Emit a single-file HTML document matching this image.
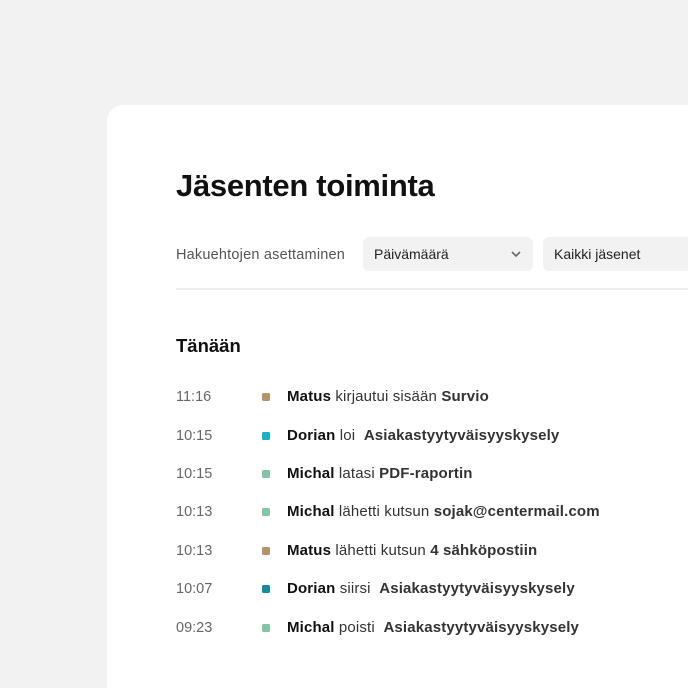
<!DOCTYPE html>
<html style="overflow:hidden;height:688px"><head><meta charset="utf-8"><style>
body{margin:0;width:688px;height:688px;background:#f1f2f1;overflow:hidden;font-family:"Liberation Sans",Arial,sans-serif;position:relative}
.card{position:absolute;left:107px;top:105px;width:581px;height:583px;background:#fff;border-radius:16px 0 0 0}
h1{position:absolute;left:176px;top:168px;margin:0;font-size:31px;font-weight:bold;color:#111;letter-spacing:-0.3px}
.lab{position:absolute;left:176px;top:247px;font-size:14.5px;color:#555;letter-spacing:0.2px}
.sel{position:absolute;top:237px;height:34px;background:#f2f2f2;border-radius:6px;font-size:14px;color:#222;line-height:35px;box-sizing:border-box;padding-left:11px}
.hr{position:absolute;left:176px;top:288px;width:512px;height:2px;background:#ececec}
h2{position:absolute;left:176px;top:335px;margin:0;font-size:18.5px;font-weight:bold;color:#111}
.row{position:absolute;left:0;width:688px;height:20px;font-size:15px;line-height:20px;color:#333;white-space:nowrap}
.t{position:absolute;left:176px;color:#666;font-size:14.5px}
.d{position:absolute;left:262px;top:6px;width:8px;height:8px;border-radius:1.5px}
.x{position:absolute;left:287px;letter-spacing:0.15px}
b{color:#111}
.o{font-weight:bold;color:#333}
</style></head><body>
<div class="card"></div>
<h1>Jäsenten toiminta</h1>
<div class="lab">Hakuehtojen asettaminen</div>
<div class="sel" style="left:363px;width:170px">Päivämäärä<svg style="position:absolute;right:12px;top:14px" width="10" height="7" viewBox="0 0 10 7"><path d="M1 1l4 4 4-4" fill="none" stroke="#666" stroke-width="1.6"/></svg></div>
<div class="sel" style="left:543px;width:160px">Kaikki jäsenet</div>
<div class="hr"></div>
<h2>Tänään</h2>
<div class="row" style="top:387px"><span class="t">11:16</span><span class="d" style="background:#b8946a"></span><span class="x"><b>Matus</b> kirjautui sisään <span class="o">Survio</span></span></div>
<div class="row" style="top:426px"><span class="t">10:15</span><span class="d" style="background:#1ab0c8"></span><span class="x"><b>Dorian</b> loi &nbsp;<span class="o">Asiakastyytyväisyyskysely</span></span></div>
<div class="row" style="top:464px"><span class="t">10:15</span><span class="d" style="background:#86c4a8"></span><span class="x"><b>Michal</b> latasi <span class="o">PDF-raportin</span></span></div>
<div class="row" style="top:502px"><span class="t">10:13</span><span class="d" style="background:#86c4a8"></span><span class="x"><b>Michal</b> lähetti kutsun <span class="o">sojak@centermail.com</span></span></div>
<div class="row" style="top:541px"><span class="t">10:13</span><span class="d" style="background:#b8946a"></span><span class="x"><b>Matus</b> lähetti kutsun <span class="o">4 sähköpostiin</span></span></div>
<div class="row" style="top:579px"><span class="t">10:07</span><span class="d" style="background:#178a9c"></span><span class="x"><b>Dorian</b> siirsi &nbsp;<span class="o">Asiakastyytyväisyyskysely</span></span></div>
<div class="row" style="top:618px"><span class="t">09:23</span><span class="d" style="background:#86c4a8"></span><span class="x"><b>Michal</b> poisti &nbsp;<span class="o">Asiakastyytyväisyyskysely</span></span></div>
</body></html>
